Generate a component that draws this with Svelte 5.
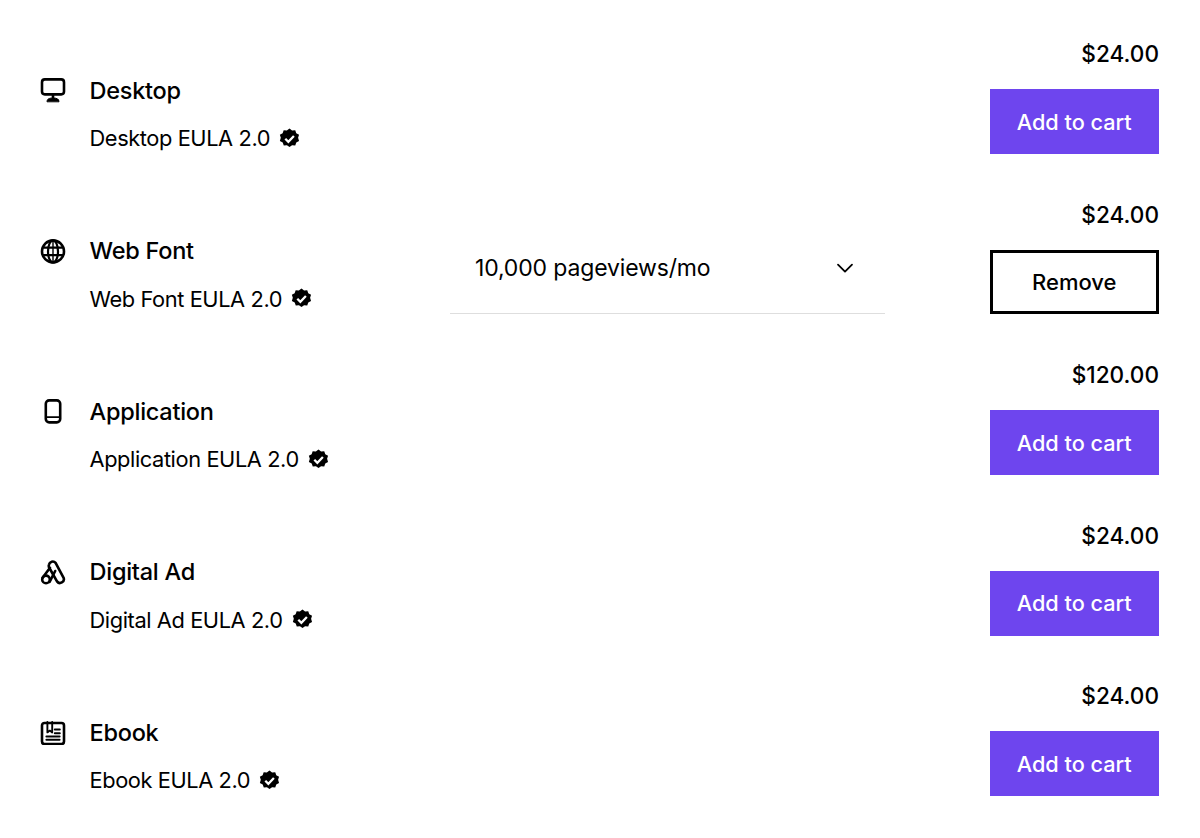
<script>
  const licenses = [
    { name: 'Desktop', icon: 'desktop', price: '$24.00' },
    { name: 'Web Font', icon: 'globe', price: '$24.00', inCart: true, select: '10,000 pageviews/mo' },
    { name: 'Application', icon: 'phone', price: '$120.00' },
    { name: 'Digital Ad', icon: 'ad', price: '$24.00' },
    { name: 'Ebook', icon: 'book', price: '$24.00' }
  ]
</script>

<main>
  {#each licenses as item}
    <section class="row">
      <div class="info">
        <div class="title">
          <svg class="icon" viewBox="0 0 26 26" fill="none" stroke="#000" stroke-width="2.6" stroke-linecap="round" stroke-linejoin="round">
            {#if item.icon === 'desktop'}
              <rect x="2" y="2.4" width="22" height="15" rx="2.8" />
              <path d="M13 18v3" />
              <path d="M7 24.4c0-2.4 2.2-3.4 6-3.4s6 1 6 3.4z" fill="#000" stroke-width="1" />
            {:else if item.icon === 'globe'}
              <circle cx="13" cy="13.4" r="11" />
              <ellipse cx="13" cy="13.4" rx="5" ry="11" stroke-width="2.2" />
              <path d="M3 9.6h20M3 17.2h20" stroke-width="2.2" />
              <path d="M13 3v21" stroke-width="1.4" />
            {:else if item.icon === 'phone'}
              <rect x="5.8" y="2.4" width="14.4" height="22" rx="3.4" />
              <path d="M6 19.2h14" stroke-width="1.7" />
            {:else if item.icon === 'ad'}
              <path d="M9 5.6a3.8 3.8 0 0 1 6.6-1.8l8 15a3.8 3.8 0 0 1-6.6 3.6L9.4 9a3.8 3.8 0 0 1-.4-3.4z" />
              <path d="M10 8.8L2.6 18.8" />
              <path d="M9.6 22.8L15.2 12" />
              <circle cx="6" cy="20.4" r="3.8" />
            {:else}
              <rect x="2" y="4" width="22" height="21" rx="2.4" />
              <path d="M7.4 3v10.4l2.4-1.8 2.4 1.8V3" stroke-width="1.9" />
              <path d="M14.8 10.4h5M14.8 14.2h5M6.4 17.4h13.2M6.4 20.8h13.2" stroke-width="2" />
            {/if}
          </svg>
          <h2>{item.name}</h2>
        </div>
        <p class="eula">
          {item.name} EULA 2.0
          <svg class="badge" viewBox="0 0 22 22">
            <path fill="#000" d="M11 .6l2.7 2 3.3-.3 1.1 3.2 2.9 1.6-1 3.2 1 3.2-2.9 1.6-1.1 3.2-3.3-.3-2.7 2-2.7-2-3.3.3-1.1-3.2L.9 13.5l1-3.2-1-3.2 2.9-1.6 1.1-3.2 3.3.3z" />
            <path d="M6.6 11.2l3.2 3.2 5.8-6" fill="none" stroke="#fff" stroke-width="2.4" />
          </svg>
        </p>
      </div>

      <div class="option">
        {#if item.select}
          <button class="select">
            <span>{item.select}</span>
            <svg viewBox="0 0 18 10" fill="none" stroke="#000" stroke-width="1.8" stroke-linecap="round" stroke-linejoin="round">
              <path d="M2 1.6l7 7 7-7" />
            </svg>
          </button>
        {/if}
      </div>

      <div class="buy">
        <div class="price">{item.price}</div>
        <button class="cart" class:remove={item.inCart}>{item.inCart ? 'Remove' : 'Add to cart'}</button>
      </div>
    </section>
  {/each}
</main>

<style>
  :global(body) {
    background: #fff;
    color: #000;
    font-family: Inter, "Liberation Sans", sans-serif;
  }

  main {
    display: grid;
    grid-auto-rows: 160.5px;
    padding: 36.2px 41px 0 40px;
    height: 802px;
    overflow: hidden;
  }

  .row {
    display: grid;
    grid-template-columns: 410px 435px 1fr;
    align-items: start;
  }

  .info {
    padding-top: 38px;
  }

  .title {
    display: flex;
    align-items: center;
    gap: 23.5px;
    height: 32px;
  }

  .icon {
    width: 26px;
    height: 26px;
  }

  h2 {
    margin: 0;
    font-size: 23.5px;
    font-weight: 500;
    letter-spacing: -0.25px;
  }

  .eula {
    display: flex;
    align-items: center;
    gap: 9px;
    margin: 16px 0 0 49.5px;
    font-size: 21.8px;
    line-height: 32px;
    font-weight: 400;
    letter-spacing: -0.4px;
  }

  .badge {
    width: 21px;
    height: 21px;
  }

  .option {
    padding-top: 52.8px;
  }

  .select {
    display: flex;
    align-items: center;
    justify-content: space-between;
    width: 100%;
    height: 64.5px;
    padding: 0 31px 27px 25px;
    background: none;
    border: 0;
    border-bottom: 1px solid #dedede;
    color: #000;
    font: 400 23px/32px Inter, "Liberation Sans", sans-serif;
    letter-spacing: -0.15px;
  }

  .select svg {
    width: 18px;
    height: 10px;
  }

  .buy {
    display: flex;
    flex-direction: column;
    align-items: flex-end;
    gap: 19px;
    height: 100%;
  }

  .price {
    padding-top: 1px;
    font-size: 22.6px;
    font-weight: 500;
    line-height: 33px;
  }

  .cart {
    width: 169.5px;
    height: 65px;
    background: #6e45ee;
    border: 0;
    color: #fff;
    font: 500 21.7px/32px Inter, "Liberation Sans", sans-serif;
  }

  .cart.remove {
    height: 64.5px;
    background: #fff;
    border: 3px solid #000;
    color: #000;
    font-size: 22px;
  }
</style>
